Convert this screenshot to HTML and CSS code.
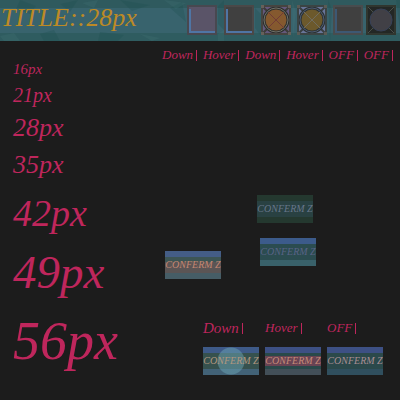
FILE: index.html
```html
<!DOCTYPE html>
<html lang="en">
<head>
<meta charset="utf-8">
<title>TITLE::28px</title>
<link rel="stylesheet" href="styles.css">
</head>
<body>
<header class="bar">
  <svg class="texture" viewBox="0 0 400 41" preserveAspectRatio="none" aria-hidden="true">
    <path d="M20 0L36 6L30 14L16 9ZM60 4L78 0L70 12ZM120 0L150 5L132 11ZM40 34L54 30L60 41H44ZM100 32L124 35L118 41H98ZM170 8L182 2L186 22ZM218 6L224 0V30L218 24ZM255 8L261 14V36L255 28ZM328 0L332 9L330 41ZM396 0H400V30Z" fill="#1e5050" opacity=".3"/>
    <path d="M0 36L14 33L20 41H4ZM82 3L98 0L94 8ZM140 34L160 38L152 41ZM164 0L186 3L176 9ZM218 34L224 30V41H218ZM292 0L296 12L293 38Z" fill="#4b8080" opacity=".18"/>
  </svg>
  <h1 class="title">TITLE::28px</h1>
  <div class="tools">
    <button class="tool" aria-label="Square down"><svg viewBox="0 0 30 30"><path fill="#484850" d="M0 0h30v30H0z"/><path fill="#5a5468" d="M2 2h26v26H2z"/><path d="M3 4v23h25" fill="none" stroke="#4f75a5" stroke-width="2"/></svg></button>
    <button class="tool" aria-label="Square hover"><svg viewBox="0 0 30 30"><path fill="#4a4848" d="M0 0h30v30H0z"/><path fill="#404040" d="M2 2h26v26H2z"/><path d="M3 4v23h25" fill="none" stroke="#4f75a5" stroke-width="2"/></svg></button>
    <button class="tool" aria-label="Round down"><svg viewBox="0 0 30 30"><path fill="#64597c" d="M0 0h30v30H0z"/><path d="M1 1l28 28M29 1L1 29" stroke="#3c3c38" stroke-width="2"/><circle cx="15" cy="15" r="12" fill="#85592f" stroke="#2e302e" stroke-width="3"/><circle cx="15" cy="15" r="12" fill="none" stroke="#6f7068"/><path d="M7 7l16 16M23 7L7 23" stroke="#713b36"/><path d="M1 1h28v28H1z" fill="none" stroke="#464440" stroke-width="2"/><path d="M0 0h3v3H0zM27 0h3v3h-3zM0 27h3v3H0zM27 27h3v3h-3z" fill="#66605a"/></svg></button>
    <button class="tool" aria-label="Round hover"><svg viewBox="0 0 30 30"><path fill="#687599" d="M0 0h30v30H0z"/><path d="M1 1l28 28M29 1L1 29" stroke="#3a3f40" stroke-width="2"/><circle cx="15" cy="15" r="12" fill="#6c592c" stroke="#2c3234" stroke-width="3"/><circle cx="15" cy="15" r="12" fill="none" stroke="#4c5b72"/><path d="M7 7l16 16M23 7L7 23" stroke="#6f6c60"/><path d="M1 1h28v28H1z" fill="none" stroke="#3b4444" stroke-width="2"/><path d="M0 0h3v3H0zM27 0h3v3h-3zM0 27h3v3H0zM27 27h3v3h-3z" fill="#5a5a55"/></svg></button>
    <button class="tool" aria-label="Square off"><svg viewBox="0 0 30 30"><path fill="#484c4e" d="M0 0h30v30H0z"/><path fill="#404040" d="M2 2h26v26H2z"/><path d="M3 4v23h25" fill="none" stroke="#3d5873" stroke-width="2"/></svg></button>
    <button class="tool" aria-label="Round off"><svg viewBox="0 0 30 30"><path fill="#232725" d="M0 0h30v30H0z"/><path d="M1 1l28 28M29 1L1 29" stroke="#4b504a"/><path d="M1 1h28v28H1z" fill="none" stroke="#30362f" stroke-width="2"/><circle cx="15" cy="15" r="11" fill="#414046" stroke="#374158" stroke-width="1"/></svg></button>
  </div>
</header>
<main class="sheet">
  <section class="sizes">
    <p class="s16">16px</p>
    <p class="s21">21px</p>
    <p class="s28">28px</p>
    <p class="s35">35px</p>
    <p class="s42">42px</p>
    <p class="s49">49px</p>
    <p class="s56">56px</p>
  </section>
  <section class="demo">
    <div class="states">
      <span class="state">Down</span><span class="state">Hover</span><span class="state">Down</span><span class="state">Hover</span><span class="state">OFF</span><span class="state">OFF</span>
    </div>
    <div class="samples">
      <button class="confirm warm">CONFERM Z</button>
      <div class="stack">
        <button class="confirm green">CONFERM Z</button>
        <button class="confirm blue">CONFERM Z</button>
      </div>
    </div>
    <div class="trio">
      <div class="cell"><span class="state large">Down</span><button class="confirm down">CONFERM Z</button></div>
      <div class="cell"><span class="state">Hover</span><button class="confirm hover">CONFERM Z</button></div>
      <div class="cell"><span class="state">OFF</span><button class="confirm off">CONFERM Z</button></div>
    </div>
  </section>
</main>
</body>
</html>
```
FILE: styles.css
```css
* { box-sizing: border-box; }

body {
  margin: 0;
  background: #1c1c1c;
  color: #bf265c;
  font-family: "Monotype Corsiva", "URW Chancery L", "Liberation Serif", serif;
  font-style: italic;
}

button {
  margin: 0;
  padding: 0;
  border: 0;
  font: inherit;
}

.bar {
  position: relative;
  display: flex;
  justify-content: space-between;
  height: 41px;
  padding: 5px 4px 0 1px;
  background: linear-gradient(#2f5a5e 8px, #38636d 8px 33px, #2f5c60 33px);
}

.texture {
  position: absolute;
  inset: 0;
  width: 100%;
  height: 100%;
}

.title {
  position: relative;
  margin: 0;
  color: #bd8a26;
  font-size: 26px;
  font-weight: 400;
  line-height: 26px;
}

.tools {
  position: relative;
  display: grid;
  grid-template-columns: 37px 37px 36px 36px 33px 30px;
}

.tool {
  width: 30px;
  height: 30px;
  background: none;
}

.tool svg { display: block; }

.sheet {
  display: grid;
  grid-template-columns: 2fr 3fr;
}

.sizes { padding: 16px 0 0 13px; }

.sizes p { margin: 0; }

.s16 { font-size: 15px; line-height: 24px; }
.s21 { font-size: 20px; line-height: 28px; }
.s28 { font-size: 26px; line-height: 38px; }
.s35 { font-size: 26px; line-height: 36px; }
.s42 { font-size: 38px; line-height: 60px; }
.s49 { font-size: 47px; line-height: 58px; }
.s56 { font-size: 54px; line-height: 80px; }

.demo { padding-top: 7px; }

.states {
  display: flex;
  justify-content: space-between;
  padding: 0 7px 0 2px;
}

.state {
  display: flex;
  align-items: center;
  gap: 3px;
  font-size: 13px;
  line-height: 14px;
}

.state::after {
  content: "";
  width: 1px;
  height: 11px;
  background: #bf265c;
}

.large { font-size: 15px; }

.samples {
  display: flex;
  align-items: flex-end;
  gap: 36px;
  padding: 133px 0 0 5px;
}

.stack {
  display: flex;
  flex-direction: column;
  gap: 15px;
  padding-bottom: 13px;
}

.stack .blue { margin-left: 3px; }

.confirm {
  display: block;
  width: 56px;
  height: 28px;
  overflow: hidden;
  font-size: 10px;
  line-height: 28px;
  white-space: nowrap;
}

.warm {
  color: #c48772;
  background: linear-gradient(#445d86 6px, #3d5554 6px 11px, #5b5555 11px 22px, #465d66 22px);
}

.green {
  color: #67768a;
  background: linear-gradient(#24382f 6px, #294142 6px 22px, #24382f 22px);
}

.blue {
  color: #596387;
  background: linear-gradient(#3c5b8b 6px, #2b4c50 6px 22px, #39616a 22px);
}

.trio {
  display: flex;
  gap: 6px;
  padding: 42px 0 0 43px;
}

.cell {
  display: flex;
  flex-direction: column;
  gap: 12px;
}

.down {
  color: #b2977f;
  background:
    radial-gradient(circle at 28px 14px, #6ba4b480 13px, transparent 14px),
    linear-gradient(#3e5a88 6px, #36514e 6px 22px, #426277 22px);
}

.hover {
  color: #c58b78;
  background: linear-gradient(#3d5084 6px, #29494a 6px 9px, #684353 9px 19px, #29494a 19px 22px, #434f58 22px);
}

.off {
  color: #a98e94;
  background: linear-gradient(#3d5084 6px, #2b494b 6px 22px, #304f5e 22px);
}
```
